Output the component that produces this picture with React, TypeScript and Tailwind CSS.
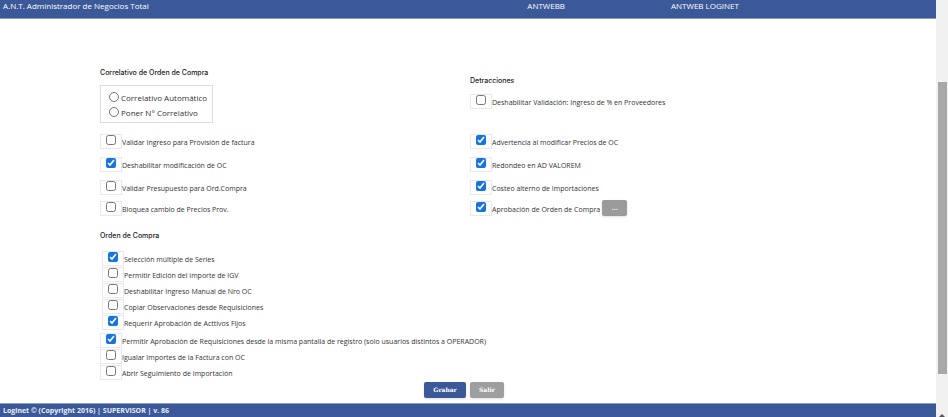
import { useState } from "react";

interface OptionProps {
  label: string;
  initial?: boolean;
  children?: React.ReactNode;
}

const Option: React.FC<OptionProps> = ({ label, initial = false, children }) => {
  const [checked, setChecked] = useState(initial);

  return (
    <div className="flex h-4 items-center">
      <label className="flex h-4 items-center">
        <span className="flex h-[15px] w-[22px] items-start justify-center border border-[#e9e9e9]">
          <input
            type="checkbox"
            className="m-0 h-[10px] w-[10px] accent-[#1673e0]"
            checked={checked}
            onChange={(e) => setChecked(e.target.checked)}
          />
        </span>
        <span className="whitespace-nowrap pt-1 text-[7px] leading-3">{label}</span>
      </label>
      {children}
    </div>
  );
};

const Heading: React.FC<{ children: React.ReactNode }> = ({ children }) => (
  <h2 className="pt-px font-['Inter','Liberation_Sans',sans-serif] text-[7px] font-medium leading-3 text-[#222]">{children}</h2>
);

const App: React.FC = () => {
  const [mode, setMode] = useState("");

  return (
    <div className="flex min-h-screen bg-white font-['Open_Sans','Noto_Sans',sans-serif] text-[#333]">
      <div className="flex min-w-0 flex-1 flex-col">
        <header className="flex h-[19px] border-b border-[#8c9dc6] bg-[#3b5998] pl-[3px] text-[8px] font-medium leading-3 text-white">
          <span className="w-[56.2%]">A.N.T. Administrador de Negocios Total</span>
          <span className="flex-1">ANTWEBB</span>
          <span className="w-[265px]">ANTWEB LOGINET</span>
        </header>

        <main className="flex-1 pl-[100px] pt-[47px]">
          <div className="grid grid-cols-[370px_1fr]">
            <section>
              <Heading>Correlativo de Orden de Compra</Heading>
              <div className="mt-[6px] flex h-[38px] w-[113px] flex-col justify-center border border-[#ddd] pl-2 text-[8px]">
                <label className="flex h-[15px] items-center gap-[2px]">
                  <input type="radio" name="correlativo" className="m-0 h-[10px] w-[10px]" checked={mode === "auto"} onChange={() => setMode("auto")} />
                  <span className="whitespace-nowrap pt-[2px] leading-3">Correlativo Automático</span>
                </label>
                <label className="flex h-[15px] items-center gap-[2px]">
                  <input type="radio" name="correlativo" className="m-0 h-[10px] w-[10px]" checked={mode === "manual"} onChange={() => setMode("manual")} />
                  <span className="whitespace-nowrap pt-[2px] leading-3">Poner N° Correlativo</span>
                </label>
              </div>
            </section>
            <section className="pt-2">
              <Heading>Detracciones</Heading>
              <div className="pt-[6px]">
                <Option label="Deshabilitar Validación: Ingreso de % en Proveedores" />
              </div>
            </section>
          </div>

          <div className="mt-[10px] grid grid-cols-[370px_1fr] gap-y-[7px]">
            <Option label="Validar Ingreso para Provisión de factura" />
            <Option label="Advertencia al modificar Precios de OC" initial />
            <Option label="Deshabilitar modificación de OC" initial />
            <Option label="Redondeo en AD VALOREM" initial />
            <Option label="Validar Presupuesto para Ord.Compra" />
            <Option label="Costeo alterno de Importaciones" initial />
          </div>
          <div className="mt-[5px] grid grid-cols-[370px_1fr]">
            <Option label="Bloquea cambio de Precios Prov." />
            <Option label="Aprobación de Orden de Compra" initial>
              <button type="button" className="ml-[2px] h-4 w-[25px] rounded-[2px] bg-[#9b9b9b] text-[7px] font-bold leading-3 text-white shadow">...</button>
            </Option>
          </div>

          <section className="pt-[13px]">
            <Heading>Orden de Compra</Heading>
            <div className="pl-[2px] pt-2">
              <Option label="Selección múltiple de Series" initial />
              <Option label="Permitir Edición del importe de IGV" />
              <Option label="Deshabilitar Ingreso Manual de Nro OC" />
              <Option label="Copiar Observaciones desde Requisiciones" />
              <Option label="Requerir Aprobación de Acttivos Fijos" initial />
            </div>
            <div className="pt-[2px]">
              <Option label="Permitir Aprobación de Requisiciones desde la misma pantalla de registro (solo usuarios distintos a OPERADOR)" initial />
              <Option label="Igualar Importes de la Factura con OC" />
              <Option label="Abrir Seguimiento de Importación" />
            </div>
          </section>
        </main>

        <div className="flex justify-center gap-1 pb-[5px] pr-2 font-['DejaVu_Serif',serif] text-[6px] font-bold leading-3 text-white">
          <button type="button" className="h-4 w-[42px] rounded-[2px] bg-[#3b5998] shadow">Grabar</button>
          <button type="button" className="h-4 w-[34px] rounded-[2px] bg-[#9e9e9e] shadow">Salir</button>
        </div>

        <footer className="h-[14px] border-t border-[#8c9dc6] bg-[#3b5998] pl-[3px] pt-px text-[7px] font-bold leading-3 text-[#e8edf7]">
          Loginet © (Copyright 2016) | SUPERVISOR | v. 86
        </footer>
      </div>

      <div className="flex w-3 flex-col items-center bg-[#f1f1f1] pt-[82px]">
        <div className="h-[292px] w-[9px] bg-[#a8a8a8]" />
        <svg className="mt-auto" width="6" height="4" viewBox="0 0 6 4">
          <path d="M0 4L3 1l3 3z" fill="#555" />
        </svg>
      </div>
    </div>
  );
};

export default App;
